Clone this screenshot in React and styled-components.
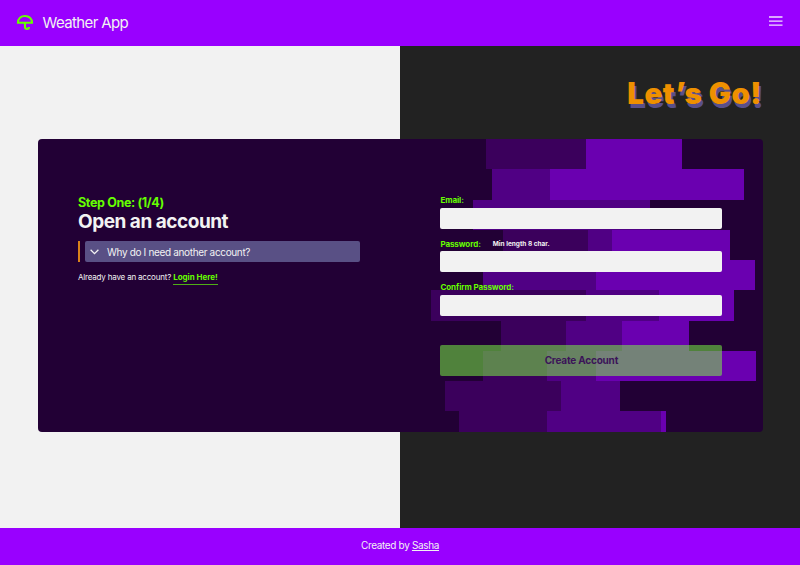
import React from "react";
import styled, { createGlobalStyle } from "styled-components";

const GlobalStyle = createGlobalStyle`
  *, *::before, *::after { box-sizing: border-box; }
  body { margin: 0; font-family: Inter, "Liberation Sans", sans-serif; color: #f2f2f2; overflow: hidden; }
`;

const Page = styled.div`
  display: flex;
  flex-direction: column;
  height: 565px;
`;

const Header = styled.header`
  display: flex;
  align-items: center;
  height: 46px;
  padding: 0 17px 0 16px;
  background: #9900ff;
`;

const Logo = styled.svg`
  width: 18px;
  height: 18px;
  flex: none;
`;

const Brand = styled.span`
  margin-left: 8.5px;
  font-size: 15px;
  line-height: 20px;
  letter-spacing: -0.62px;
  flex: 1;
`;

const MenuButton = styled.button`
  display: flex;
  width: 14px;
  height: 12px;
  margin-top: -3.4px;
  padding: 0;
  border: 0;
  background: none;
`;

const Main = styled.main`
  height: 482.4px;
  padding: 30px 37px 0 38px;
  background: linear-gradient(90deg, #f2f2f2 50%, #222222 50%);
`;

const Title = styled.h1`
  margin: 0;
  height: 63px;
  padding-right: 1px;
  text-align: right;
  font-size: 29.5px;
  line-height: 34px;
  font-weight: 900;
  letter-spacing: 0.45px;
  color: #ee9000;
  text-shadow: 2px 3.5px 0 #59508a;
`;

const Card = styled.section`
  position: relative;
  display: grid;
  grid-template-columns: 282px 282px;
  column-gap: 80.4px;
  height: 293px;
  padding: 56px 40px 0;
  border-radius: 4px;
  overflow: hidden;
  background: #220035;
`;

const Pattern = styled.svg`
  position: absolute;
  inset: 0;
  width: 725px;
  height: 293px;
`;

const Intro = styled.div`
  position: relative;
`;

const Step = styled.p`
  margin: 0;
  font-size: 12.5px;
  line-height: 16px;
  font-weight: 700;
  color: #66ff00;
  letter-spacing: -0.35px;
`;

const Heading = styled.h2`
  margin: 0;
  font-size: 19px;
  line-height: 22px;
  font-weight: 700;
  letter-spacing: -0.48px;
`;

const Question = styled.div`
  display: flex;
  height: 21px;
  margin-top: 8px;
  padding-left: 5px;
  border-left: 2px solid #d9821a;
`;

const Summary = styled.div`
  display: flex;
  align-items: center;
  gap: 8px;
  flex: 1;
  padding-left: 5px;
  border-radius: 2px;
  background: #595085;
  font-size: 10px;
  letter-spacing: -0.34px;
`;

const LoginLine = styled.p`
  margin: 9px 0 0;
  font-size: 8px;
  line-height: 13px;
  letter-spacing: -0.19px;
`;

const LoginLink = styled.a`
  display: inline-block;
  color: #66ff00;
  font-weight: 700;
  letter-spacing: -0.02px;
  border-bottom: 1px solid #4fae16;
`;

const Form = styled.form`
  position: relative;
  margin-top: -0.7px;
`;

const Label = styled.label`
  display: flex;
  align-items: center;
  height: 13px;
  padding-top: 1.6px;
  font-size: 8px;
  font-weight: 700;
  color: #66ff00;
  margin-top: -1.5px;
  letter-spacing: -0.08px;
`;

const Hint = styled.span`
  margin-left: 12px;
  font-size: 6.5px;
  letter-spacing: 0;
  color: #f2f2f2;
`;

const Input = styled.input`
  display: block;
  width: 282px;
  height: 21px;
  margin: 2px 0 9px;
  padding: 0 6px;
  border: 0;
  border-radius: 2px;
  background: #f2f2f2;
`;

const Submit = styled.button`
  display: block;
  width: 282px;
  height: 31px;
  margin-top: 29px;
  padding: 0;
  border: 0;
  border-radius: 2px;
  background: rgba(126, 255, 66, 0.51);
  font: 700 10px Inter, sans-serif;
  letter-spacing: -0.2px;
  color: #3b1458;
`;

const Footer = styled.footer`
  display: flex;
  flex: 1;
  align-items: center;
  justify-content: center;
  padding-bottom: 3px;
  background: #9900ff;
  font-size: 10px;
  letter-spacing: -0.35px;
`;

const FooterLink = styled.a`
  margin-left: 2.5px;
  text-decoration: underline;
  text-underline-offset: 1px;
`;

const DARK = "#3b005c";
const MID = "#500084";
const BRIGHT = "#6a00b0";

// Each row lists its [start, end, colour] bands.
const BANDS = [
  [[448, 548, DARK], [548, 644, BRIGHT]],
  [[453.7, 512, MID], [512, 706, BRIGHT]],
  [[435, 612, MID]],
  [[465, 550, DARK], [550, 574, MID], [574, 692, BRIGHT]],
  [[445, 558, MID], [558, 717, BRIGHT]],
  [[393.3, 548, DARK], [548, 620.6, MID], [620.6, 696, BRIGHT]],
  [[463, 528, DARK], [528, 584, MID], [584, 651, BRIGHT]],
  [[444.6, 509, DARK], [509, 557.6, MID], [557.6, 718, BRIGHT]],
  [[407, 523, DARK], [523, 582, MID]],
  [[421.3, 509, DARK], [509, 623, MID], [623, 628, BRIGHT]],
];
const ROW = 30.27;

export default function App() {
  return (
    <Page>
      <GlobalStyle />
      <Header>
        <Logo viewBox="0 0 18 18" fill="none" stroke="#66ff00" strokeWidth="2.1">
          <path d="M2 8.7C2 4.6 5 2 9 2S16 4.6 16 8.7Z" />
          <path d="M9 9v4.1c0 2.5 4 2.5 4 0" />
        </Logo>
        <Brand>Weather App</Brand>
        <MenuButton aria-label="Menu">
          <svg width="14" height="12" viewBox="0 0 14 12" stroke="#f2e0ff" strokeWidth="1.3">
            <path d="M0 2h13.5M0 6.1h13.5M0 10.2h13.5" />
          </svg>
        </MenuButton>
      </Header>
      <Main>
        <Title>Let’s Go!</Title>
        <Card>
          <Pattern viewBox="0 0 725 293" shapeRendering="crispEdges" aria-hidden="true">
            {BANDS.map((bands, row) =>
              bands.map(([start, end, fill]) => (
                <rect key={`${row}-${start}`} x={start} y={row * ROW} width={end - start} height={ROW} fill={fill} />
              ))
            )}
          </Pattern>
          <Intro>
            <Step>Step One: (1/4)</Step>
            <Heading>Open an account</Heading>
            <Question>
              <Summary>
                <svg width="9" height="6" viewBox="0 0 9 6" fill="none" stroke="#f2f2f2" strokeWidth="1.3">
                  <path d="M.6.8 4.5 4.7 8.4.8" />
                </svg>
                Why do I need another account?
              </Summary>
            </Question>
            <LoginLine>
              Already have an account? <LoginLink>Login Here!</LoginLink>
            </LoginLine>
          </Intro>
          <Form>
            <Label htmlFor="email">Email:</Label>
            <Input id="email" type="email" />
            <Label htmlFor="password">
              Password:<Hint>Min length 8 char.</Hint>
            </Label>
            <Input id="password" type="password" />
            <Label htmlFor="confirm">Confirm Password:</Label>
            <Input id="confirm" type="password" />
            <Submit type="button">Create Account</Submit>
          </Form>
        </Card>
      </Main>
      <Footer>
        Created by <FooterLink>Sasha</FooterLink>
      </Footer>
    </Page>
  );
}
